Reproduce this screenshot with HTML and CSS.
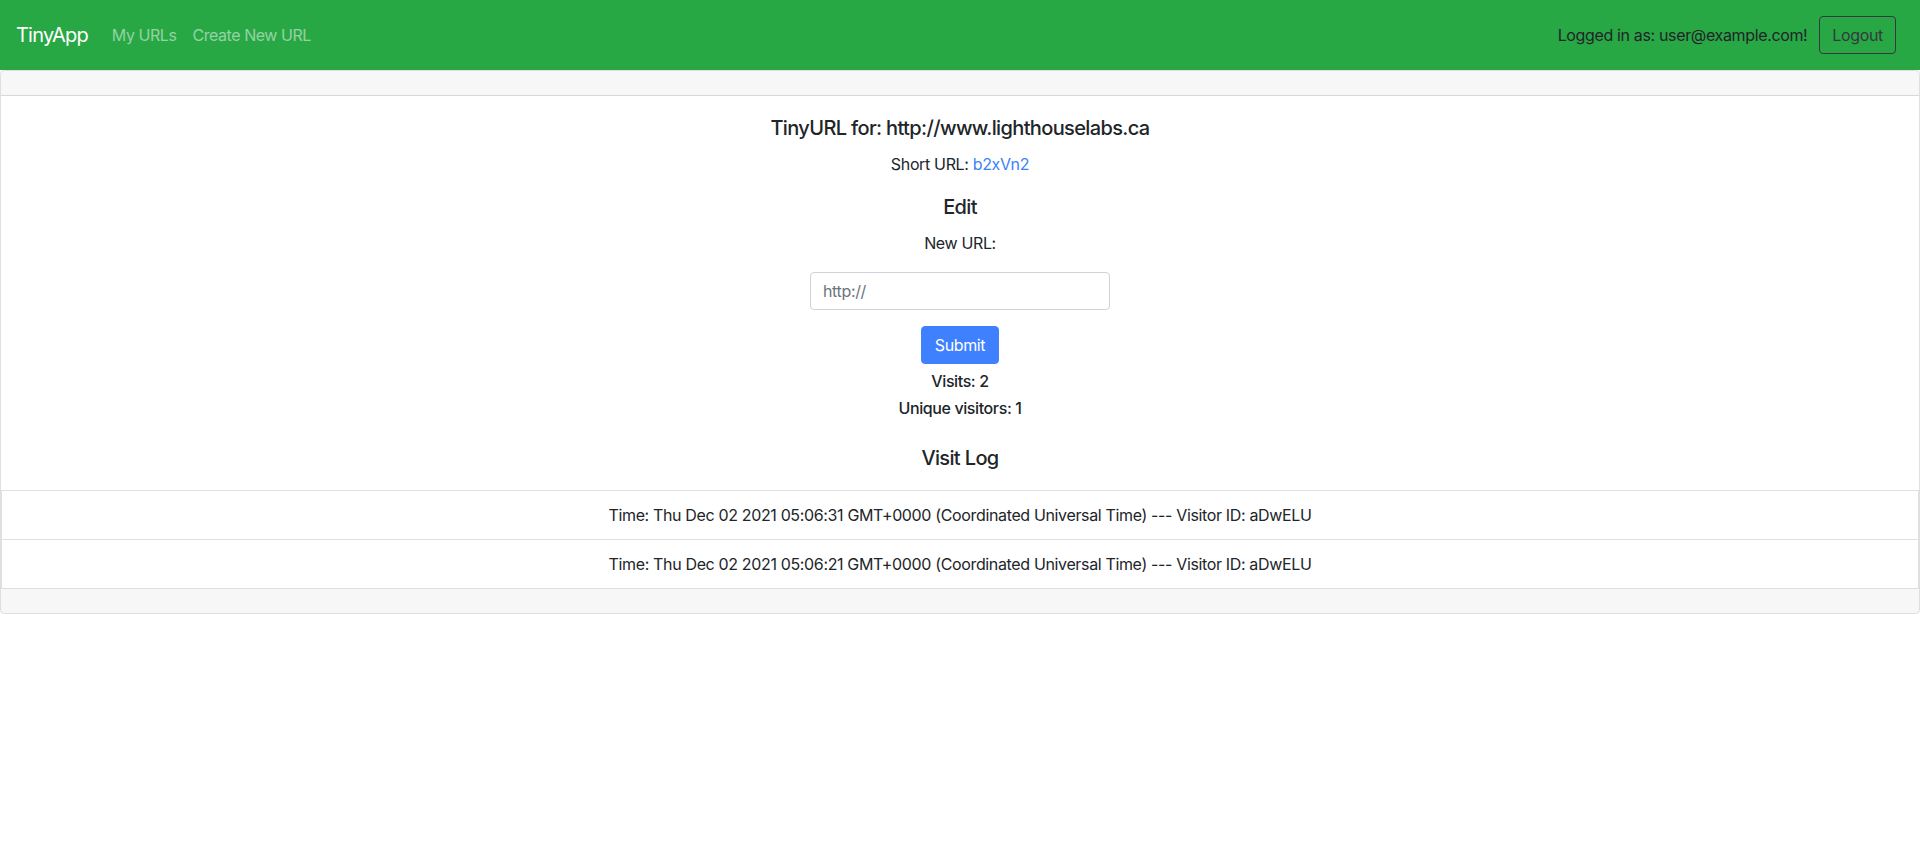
FILE: index.html
```html
<!DOCTYPE html>
<html lang="en">
<head>
<meta charset="utf-8">
<title>TinyApp</title>
<link rel="stylesheet" href="styles.css">
</head>
<body>
<nav class="navbar">
  <div class="nav-left">
    <a class="brand" href="#">TinyApp</a>
    <a class="nav-link" href="#">My URLs</a>
    <a class="nav-link" href="#">Create New URL</a>
  </div>
  <div class="nav-right">
    <span class="nav-text">Logged in as: user@example.com!</span>
    <button class="btn-logout" type="button">Logout</button>
  </div>
</nav>
<main class="card">
  <div class="card-header"></div>
  <div class="card-body">
    <h5 class="card-title">TinyURL for: http://www.lighthouselabs.ca</h5>
    <p class="short">Short URL: <a href="#">b2xVn2</a></p>
    <h5 class="edit-title">Edit</h5>
    <form class="edit-form">
      <label class="form-label" for="longURL">New URL:</label>
      <input class="form-input" id="longURL" type="text" placeholder="http://">
      <button class="btn-submit" type="submit">Submit</button>
    </form>
    <h6 class="stat">Visits: 2</h6>
    <h6 class="stat">Unique visitors: 1</h6>
    <h5 class="log-title">Visit Log</h5>
  </div>
  <ul class="list-group">
    <li class="list-item">Time: Thu Dec 02 2021 05:06:31 GMT+0000 (Coordinated Universal Time) --- Visitor ID: aDwELU</li>
    <li class="list-item">Time: Thu Dec 02 2021 05:06:21 GMT+0000 (Coordinated Universal Time) --- Visitor ID: aDwELU</li>
  </ul>
  <div class="card-footer"></div>
</main>
</body>
</html>
```
FILE: styles.css
```css
* { box-sizing: border-box; }
html, body { margin: 0; padding: 0; }
body {
  font-family: Inter, "Noto Sans", "Liberation Sans", sans-serif;
  font-size: 16px;
  line-height: 1.5;
  letter-spacing: -0.022em;
  color: #212529;
  background: #fff;
}
.navbar {
  display: flex;
  align-items: center;
  justify-content: space-between;
  background: #28a745;
  padding: 16px 24px 16px 16px;
  height: 70px;
}
.nav-left { display: flex; align-items: center; }
.brand {
  color: #fff;
  font-size: 20px;
  line-height: 30px;
  letter-spacing: -0.04em;
  text-decoration: none;
  margin-right: 24px;
}
.nav-link {
  color: rgba(255, 255, 255, 0.5);
  text-decoration: none;
  margin-right: 16px;
  letter-spacing: -0.028em;
}
.nav-right { display: flex; align-items: center; }
.nav-text { color: #212529; margin-right: 12px; }
.btn-logout {
  font-family: inherit;
  font-size: 16px;
  line-height: 24px;
  letter-spacing: inherit;
  color: #343a40;
  background: transparent;
  border: 1px solid #343a40;
  border-radius: 4px;
  padding: 6px 12px;
  height: 38px;
}
.card {
  display: block;
  border: 1px solid rgba(0, 0, 0, 0.125);
  border-radius: 4px;
  overflow: hidden;
}
.card-header {
  height: 25px;
  background: rgba(0, 0, 0, 0.03);
  border-bottom: 1px solid rgba(0, 0, 0, 0.125);
}
.card-body {
  padding: 20px 20px 20px;
  text-align: center;
}
h5, h6 { font-weight: 500; line-height: 1.2; margin: 0; }
h5 { font-size: 20px; letter-spacing: -0.032em; }
h6 { font-size: 16px; letter-spacing: -0.025em; }
.card-title { margin-bottom: 12px; }
.short { margin: 0 0 19px; }
.short a { color: #3b82f7; text-decoration: none; }
.edit-title { margin-bottom: 12px; }
.edit-form { display: flex; flex-direction: column; align-items: center; }
.form-label { display: block; margin-bottom: 17px; }
.form-input {
  width: 300px;
  height: 38px;
  padding: 6px 12px;
  font-family: inherit;
  font-size: 16px;
  letter-spacing: inherit;
  color: #495057;
  border: 1px solid #ced4da;
  border-radius: 4px;
}
.form-input::placeholder { color: #6c757d; }
.btn-submit {
  margin-top: 16px;
  height: 38px;
  padding: 6px 13px;
  font-family: inherit;
  font-size: 16px;
  line-height: 24px;
  letter-spacing: inherit;
  color: #fff;
  background: #3f80ff;
  border: 1px solid #3f80ff;
  border-radius: 4px;
  margin-bottom: 8px;
}
.stat { margin-bottom: 8px; }
.log-title { margin-top: 28px; }
.list-group { list-style: none; margin: 0; padding: 0; }
.list-item {
  text-align: center;
  padding: 12px 20px;
  border: 1px solid rgba(0, 0, 0, 0.125);
  border-bottom: none;
}
.list-item:last-child { border-bottom: 1px solid rgba(0, 0, 0, 0.125); }
.card-footer {
  height: 24px;
  background: rgba(0, 0, 0, 0.03);
}
```
